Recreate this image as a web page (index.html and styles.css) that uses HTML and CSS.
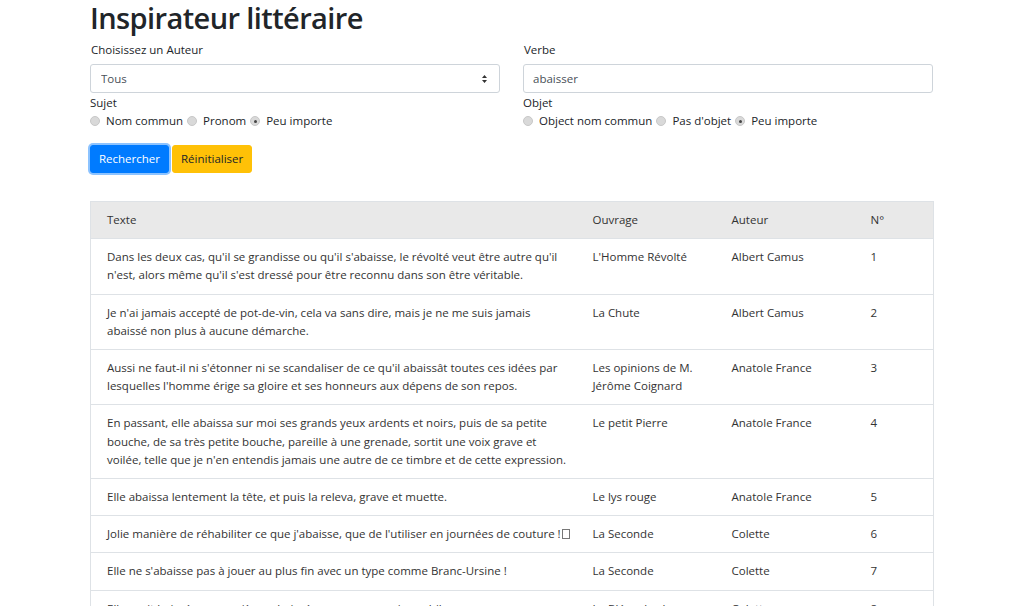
FILE: index.html
```html
<!DOCTYPE html>
<html lang="fr">
<head>
<meta charset="utf-8">
<title>Inspirateur littéraire</title>
<link rel="stylesheet" href="styles.css">
</head>
<body>
<main class="container">
  <h1 class="title">Inspirateur littéraire</h1>
  <form class="search-form">
    <div class="form-col">
      <label class="field-label" for="auteur">Choisissez un Auteur</label>
      <div class="select-wrap">
        <select id="auteur" class="form-control">
          <option>Tous</option>
        </select>
        <svg class="select-arrow" width="7" height="10" viewBox="0 0 7 10"><path d="M3.5 1 L6 4 H1 Z M3.5 9 L6 6 H1 Z" fill="#333"/></svg>
      </div>
      <div class="group-label">Sujet</div>
      <div class="radios">
        <label class="radio"><span class="dot"></span>Nom commun</label>
        <label class="radio"><span class="dot"></span>Pronom</label>
        <label class="radio"><span class="dot checked"></span>Peu importe</label>
      </div>
    </div>
    <div class="form-col">
      <label class="field-label" for="verbe">Verbe</label>
      <input id="verbe" class="form-control input" type="text" value="abaisser">
      <div class="group-label">Objet</div>
      <div class="radios">
        <label class="radio"><span class="dot"></span>Object nom commun</label>
        <label class="radio"><span class="dot"></span>Pas d'objet</label>
        <label class="radio"><span class="dot checked"></span>Peu importe</label>
      </div>
    </div>
  </form>
  <div class="buttons">
    <button type="button" class="btn btn-primary">Rechercher</button>
    <button type="button" class="btn btn-warning">Réinitialiser</button>
  </div>
  <table class="results">
    <thead>
      <tr><th class="c-text">Texte</th><th class="c-book">Ouvrage</th><th class="c-author">Auteur</th><th class="c-num">N°</th></tr>
    </thead>
    <tbody>
      <tr><td>Dans les deux cas, qu'il se grandisse ou qu'il s'abaisse, le révolté veut être autre qu'il n'est, alors même qu'il s'est dressé pour être reconnu dans son être véritable.</td><td>L'Homme Révolté</td><td>Albert Camus</td><td>1</td></tr>
      <tr><td>Je n'ai jamais accepté de pot-de-vin, cela va sans dire, mais je ne me suis jamais abaissé non plus à aucune démarche.</td><td>La Chute</td><td>Albert Camus</td><td>2</td></tr>
      <tr><td>Aussi ne faut-il ni s'étonner ni se scandaliser de ce qu'il abaissât toutes ces idées par lesquelles l'homme érige sa gloire et ses honneurs aux dépens de son repos.</td><td>Les opinions de M. Jérôme Coignard</td><td>Anatole France</td><td>3</td></tr>
      <tr><td>En passant, elle abaissa sur moi ses grands yeux ardents et noirs, puis de sa petite bouche, de sa très petite bouche, pareille à une grenade, sortit une voix grave et voilée, telle que je n'en entendis jamais une autre de ce timbre et de cette expression.</td><td>Le petit Pierre</td><td>Anatole France</td><td>4</td></tr>
      <tr><td>Elle abaissa lentement la tête, et puis la releva, grave et muette.</td><td>Le lys rouge</td><td>Anatole France</td><td>5</td></tr>
      <tr><td>Jolie manière de réhabiliter ce que j'abaisse, que de l'utiliser en journées de couture !<span class="missing"></span></td><td>La Seconde</td><td>Colette</td><td>6</td></tr>
      <tr><td>Elle ne s'abaisse pas à jouer au plus fin avec un type comme Branc-Ursine !</td><td>La Seconde</td><td>Colette</td><td>7</td></tr>
      <tr><td>Elle avait baissé ses paupières abaissées sur ses yeux, immobile.</td><td>Le Blé en herbe</td><td>Colette</td><td>8</td></tr>
    </tbody>
  </table>
</main>
</body>
</html>
```

FILE: styles.css
```css
html, body {
  margin: 0;
  padding: 0;
  background: #fff;
}
body {
  font-family: "Open Sans", "Noto Sans", sans-serif;
  color: #212529;
  font-size: 11.5px;
  line-height: 1.5;
}
.container {
  width: 843px;
  margin-left: 90px;
}
.title {
  margin: 0 0 5px 0;
  font-size: 29px;
  font-weight: 600;
  line-height: 36px;
  letter-spacing: -0.6px;
  color: #212529;
}
.search-form {
  display: grid;
  grid-template-columns: 410px 410px;
  column-gap: 23px;
}
.form-col {
  display: flex;
  flex-direction: column;
}
.field-label {
  display: block;
  font-size: 11.5px;
  line-height: 18px;
  margin-bottom: 5px;
  padding-left: 1px;
}
.form-control {
  box-sizing: border-box;
  width: 100%;
  height: 29px;
  border: 1px solid #ced4da;
  border-radius: 3px;
  background: #fff;
  font-family: inherit;
  font-size: 11.5px;
  color: #495057;
  padding: 0 9px;
  margin: 0;
}
.select-wrap {
  position: relative;
}
.select-wrap select {
  appearance: none;
  -webkit-appearance: none;
  padding-left: 10px;
}
.select-arrow {
  position: absolute;
  right: 12px;
  top: 10px;
  pointer-events: none;
}
.input {
  outline: none;
}
.group-label {
  line-height: 18px;
  margin-top: 1px;
}
.radios {
  display: flex;
  align-items: center;
  line-height: 18px;
}
.radio {
  display: flex;
  align-items: center;
  margin-right: 4px;
}
.dot {
  box-sizing: border-box;
  width: 10px;
  height: 10px;
  border-radius: 50%;
  background: #d9d9d9;
  border: 1px solid #c8c8c8;
  margin-right: 6px;
  position: relative;
}
.dot.checked::after {
  content: "";
  position: absolute;
  left: 2.5px;
  top: 2.5px;
  width: 3px;
  height: 3px;
  border-radius: 50%;
  background: #444;
}
.buttons {
  display: flex;
  gap: 3px;
  margin-top: 15px;
}
.btn {
  font-family: inherit;
  font-size: 11.5px;
  line-height: 18px;
  height: 28px;
  padding: 0 8px;
  border-radius: 3px;
  border: 1px solid transparent;
  cursor: pointer;
}
.btn-primary {
  background: #007bff;
  color: #fff;
  border-color: #007bff;
  box-shadow: 0 0 0 2px rgba(0, 123, 255, 0.45);
}
.btn-warning {
  background: #ffc107;
  color: #212529;
  border-color: #ffc107;
}
.results {
  margin-top: 28px;
  width: 843px;
  border-collapse: collapse;
  border: 1px solid #dee2e6;
  table-layout: fixed;
  color: #333;
}
.results th,
.results td {
  box-sizing: border-box;
  padding: 9px 6px 9px 16px;
  line-height: 18.2px;
  text-align: left;
}
.results th {
  background: #e9e9e9;
  font-weight: 400;
  border-bottom: 1px solid #dee2e6;
}
.results td {
  vertical-align: top;
  border-top: 1px solid #dee2e6;
}
.c-text { width: 486px; }
.c-book { width: 139px; }
.c-author { width: 139px; }
.c-num { width: 79px; }
.missing {
  display: inline-block;
  width: 6px;
  height: 8px;
  border: 1px solid #777;
  margin-left: 1px;
  vertical-align: -1px;
}
```
